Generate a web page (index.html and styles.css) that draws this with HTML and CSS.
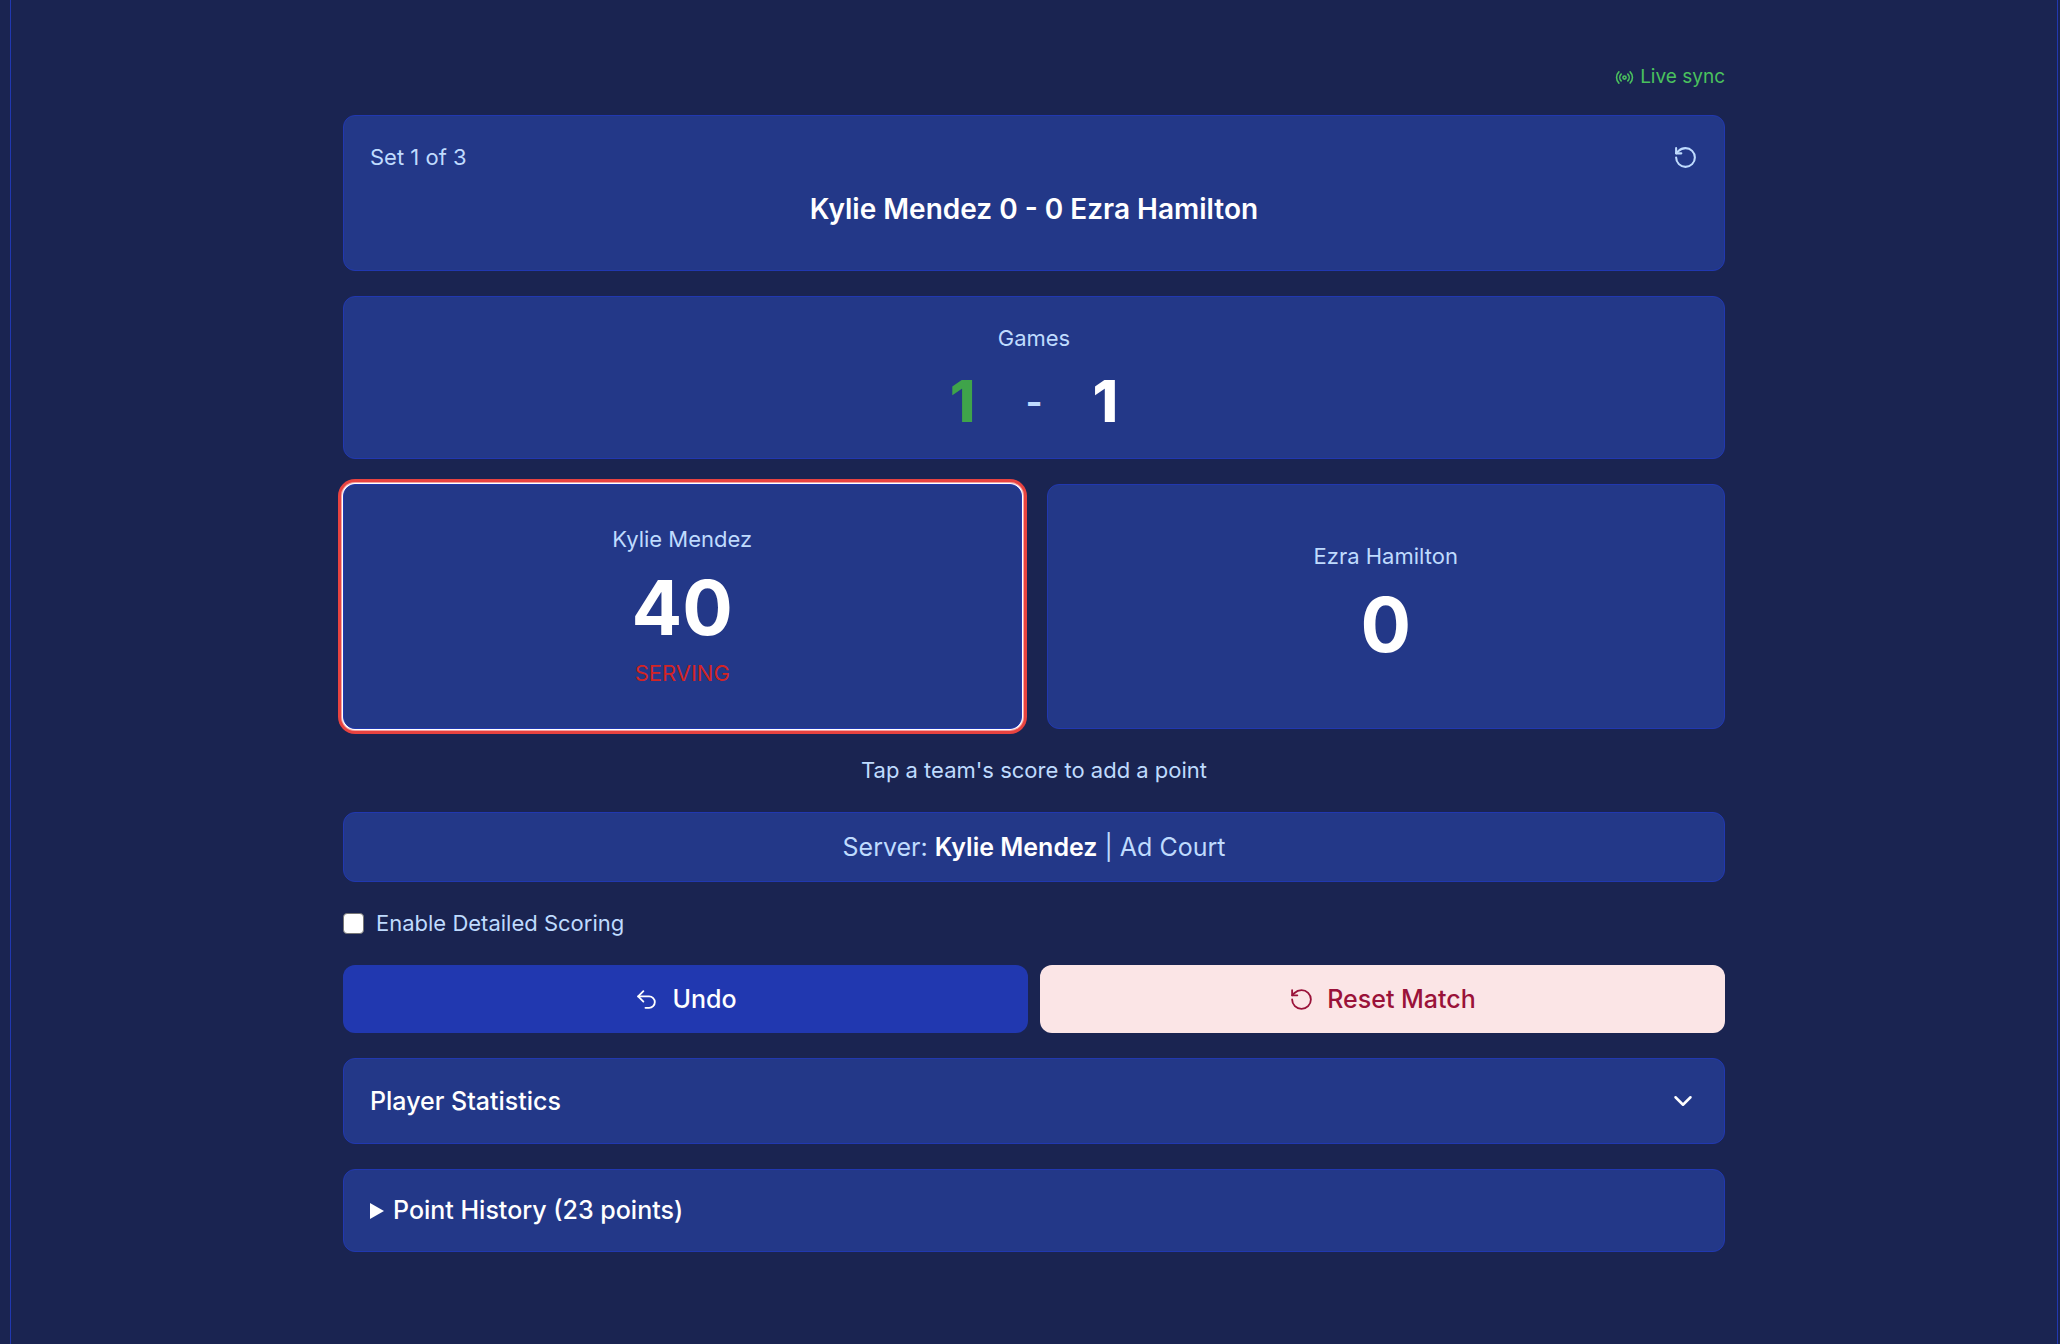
FILE: index.html
```html
<!DOCTYPE html>
<html lang="en">
<head>
<meta charset="utf-8">
<meta name="viewport" content="width=device-width, initial-scale=1">
<title>Match Scoreboard</title>
<link rel="stylesheet" href="styles.css">
</head>
<body>
<div class="frame">
<main class="board">
  <p class="sync">
    <svg class="icon icon-sync" viewBox="0 0 24 24" aria-hidden="true"><path d="M4.9 19.1C1 15.2 1 8.8 4.9 4.9"/><path d="M7.8 16.2c-2.3-2.3-2.3-6.1 0-8.5"/><circle cx="12" cy="12" r="2"/><path d="M16.2 7.8c2.3 2.3 2.3 6.1 0 8.5"/><path d="M19.1 4.9C23 8.8 23 15.1 19.1 19"/></svg>
    Live sync
  </p>

  <section class="card match">
    <div class="match-top">
      <span>Set 1 of 3</span>
      <button class="icon-button" type="button" aria-label="Reset set">
        <svg class="icon" viewBox="0 0 24 24" aria-hidden="true"><path d="M3 12a9 9 0 1 0 9-9 9.75 9.75 0 0 0-6.74 2.74L3 8"/><path d="M3 3v5h5"/></svg>
      </button>
    </div>
    <h1 class="match-title">Kylie Mendez 0 - 0 Ezra Hamilton</h1>
  </section>

  <section class="card games">
    <h2 class="label">Games</h2>
    <div class="games-score">
      <span class="games-lead">1</span>
      <span class="games-dash">-</span>
      <span>1</span>
    </div>
  </section>

  <div class="scores">
    <button class="card score score-active" type="button">
      <span class="label">Kylie Mendez</span>
      <span class="points">40</span>
      <span class="serving">SERVING</span>
    </button>
    <button class="card score" type="button">
      <span class="label">Ezra Hamilton</span>
      <span class="points">0</span>
    </button>
  </div>

  <p class="hint">Tap a team's score to add a point</p>

  <p class="card server">Server: <strong>Kylie Mendez</strong> | Ad Court</p>

  <label class="detail" for="detailed"><input class="check" type="checkbox" id="detailed">Enable Detailed Scoring</label>

  <div class="actions">
    <button class="action action-undo" type="button">
      <svg class="icon icon-thin" viewBox="0 0 24 24" aria-hidden="true"><path d="M9 14 4 9l5-5"/><path d="M4 9h10.5a5.5 5.5 0 0 1 0 11H11"/></svg>
      Undo
    </button>
    <button class="action action-reset" type="button">
      <svg class="icon icon-thin" viewBox="0 0 24 24" aria-hidden="true"><path d="M3 12a9 9 0 1 0 9-9 9.75 9.75 0 0 0-6.74 2.74L3 8"/><path d="M3 3v5h5"/></svg>
      Reset Match
    </button>
  </div>

  <button class="card stats" type="button">
    Player Statistics
    <svg class="icon icon-chevron" viewBox="0 0 24 24" aria-hidden="true"><path d="m6 9 6 6 6-6"/></svg>
  </button>

  <details class="card history">
    <summary>
      <svg class="marker" viewBox="0 0 14 16" aria-hidden="true"><path d="M0 0 14 8 0 16z"/></svg>
      Point History (23 points)
    </summary>
  </details>
</main>
</div>
</body>
</html>
```
FILE: styles.css
```css
:root {
  --page: #1a2451;
  --card: #233888;
  --line: #2138b0;
  --soft: #bfdbfe;
}

* { box-sizing: border-box; }

body {
  margin: 0;
  background: var(--page);
  color: #fff;
  font-family: Inter, "Liberation Sans", sans-serif;
  font-size: 22px;
  line-height: 33px;
}

h1, h2, p { margin: 0; }

button {
  color: inherit;
  font: inherit;
  cursor: pointer;
}

.frame {
  min-height: 100vh;
  margin: 0 2px 0 10px;
  padding: 64px 24px;
  border: solid var(--line);
  border-width: 0 1px;
}

.board {
  display: flex;
  flex-direction: column;
  gap: 25px;
  max-width: 1382px;
  margin: 0 auto;
}

.icon {
  flex: none;
  width: 25px;
  height: 25px;
  fill: none;
  stroke: currentColor;
  stroke-width: 2;
  stroke-linecap: round;
  stroke-linejoin: round;
}

.icon-sync { width: 19px; height: 19px; }
.icon-thin { stroke-width: 1.75; }
.icon-chevron { width: 30px; height: 30px; }

.sync {
  display: flex;
  align-items: center;
  justify-content: flex-end;
  gap: 6px;
  color: #4ac15e;
  font-size: 19px;
  line-height: 26px;
}

.card {
  padding: 25px 26px;
  border: 1px solid var(--line);
  border-radius: 12px;
  background: var(--card);
}

.label {
  color: var(--soft);
  font-size: 22px;
  font-weight: 400;
}

.match { padding-bottom: 39px; }

.match-top {
  display: flex;
  align-items: center;
  justify-content: space-between;
  margin-bottom: 13px;
  color: var(--soft);
}

.icon-button {
  display: flex;
  padding: 0;
  border: 0;
  background: none;
}

.match-title {
  font-size: 28px;
  font-weight: 600;
  line-height: 44px;
  text-align: center;
}

.games { text-align: center; }

.games-score {
  display: flex;
  align-items: center;
  justify-content: center;
  gap: 50px;
  margin-top: 15px;
  font-size: 58px;
  font-weight: 800;
  line-height: 63px;
}

.games-lead { color: #3fa44a; }

.games-dash {
  color: var(--soft);
  font-size: 37px;
  font-weight: 600;
}

.scores {
  display: grid;
  grid-template-columns: 1fr 1fr;
  gap: 25px;
}

.score {
  display: flex;
  flex-direction: column;
  align-items: center;
  justify-content: center;
  padding: 38px;
}

.score-active {
  box-shadow: 0 0 0 1px #fff, 0 0 0 2px #f4a5a3, 0 0 0 5px #e84340;
}

.points {
  margin: 15px 0 12px;
  font-size: 75px;
  font-weight: 700;
  line-height: 74px;
}

.serving { color: #d32424; }

.hint {
  color: var(--soft);
  text-align: center;
}

.server {
  padding: 15px 26px;
  color: var(--soft);
  font-size: 25px;
  line-height: 38px;
  text-align: center;
}

.server strong {
  color: #fff;
  font-weight: 600;
}

.detail {
  display: flex;
  align-items: center;
  align-self: flex-start;
  gap: 12px;
  color: var(--soft);
}

.check {
  appearance: none;
  width: 21px;
  height: 21px;
  margin: 0;
  border: 1px solid #767676;
  border-radius: 4px;
  background: #fff;
}

.actions {
  display: grid;
  grid-template-columns: 1fr 1fr;
  gap: 12px;
}

.action {
  display: flex;
  align-items: center;
  justify-content: center;
  gap: 13px;
  padding: 15px 26px;
  border: 0;
  border-radius: 12px;
  font-size: 25px;
  font-weight: 500;
  line-height: 38px;
}

.action-undo { background: #2138b0; }

.action-reset {
  background: #fbe5e6;
  color: #9a1239;
}

.stats {
  display: flex;
  align-items: center;
  justify-content: space-between;
  font-size: 25px;
  font-weight: 500;
  line-height: 34px;
  text-align: left;
}

.history {
  font-size: 25px;
  font-weight: 500;
}

.history summary {
  display: flex;
  align-items: center;
  gap: 9px;
  line-height: 31px;
  list-style: none;
  cursor: pointer;
}

.marker {
  width: 14px;
  height: 16px;
  fill: currentColor;
}
```
